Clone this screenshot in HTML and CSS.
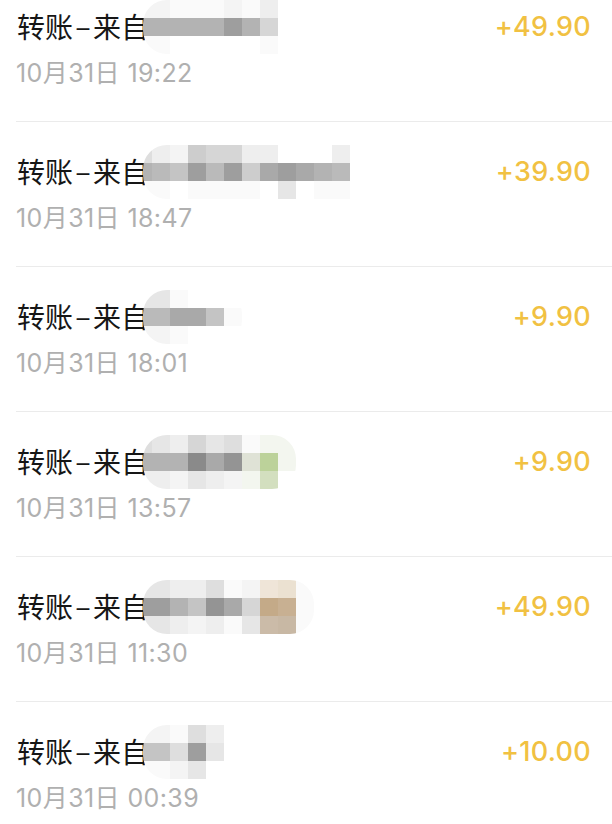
FILE: index.html
```html
<!DOCTYPE html>
<html lang="zh-CN">
<head>
<meta charset="utf-8">
<title>账单</title>
<link rel="stylesheet" href="styles.css">
</head>
<body>
<ul class="list">
  <li class="item item--cut">
    <div class="row">
      <div class="title">转账<span class="dash">-</span>来自<span class="mosaic">
        <i class="s2"></i><i class="s10"></i><i class="s1"></i>
        <i class="s2"></i><i class="s10"></i><i class="s1"></i>
        <i class="s1"></i><i class="s10"></i><i class="s0"></i>
        <i class="s1"></i><i class="s10"></i><i class="s0"></i>
        <i class="s1"></i><i class="s10"></i><i class="s0"></i>
        <i class="s2"></i><i class="s12"></i><i class="s0"></i>
        <i class="s1"></i><i class="s10"></i><i class="s0"></i>
        <i class="s3"></i><i class="s6"></i><i class="s1"></i>
      </span></div>
      <div class="amount">+49.90</div>
    </div>
    <div class="date">10月31日 19:22</div>
  </li>
  <li class="item">
    <div class="row">
      <div class="title">转账<span class="dash">-</span>来自<span class="mosaic">
        <i class="s5"></i><i class="s10"></i><i class="s1"></i>
        <i class="s3"></i><i class="s9"></i><i class="s1"></i>
        <i class="s2"></i><i class="s8"></i><i class="s0"></i>
        <i class="s7"></i><i class="s12"></i><i class="s1"></i>
        <i class="s6"></i><i class="s9"></i><i class="s1"></i>
        <i class="s6"></i><i class="s12"></i><i class="s1"></i>
        <i class="s3"></i><i class="s7"></i><i class="s1"></i>
        <i class="s3"></i><i class="s11"></i><i class="s0"></i>
        <i class="s0"></i><i class="s12"></i><i class="s4"></i>
        <i class="s0"></i><i class="s11"></i><i class="s0"></i>
        <i class="s0"></i><i class="s10"></i><i class="s1"></i>
        <i class="s3"></i><i class="s9"></i><i class="s1"></i>
      </span></div>
      <div class="amount">+39.90</div>
    </div>
    <div class="date">10月31日 18:47</div>
  </li>
  <li class="item">
    <div class="row">
      <div class="title">转账<span class="dash">-</span>来自<span class="mosaic mosaic--round">
        <i class="s4"></i><i class="s9"></i><i class="s2"></i>
        <i class="s4"></i><i class="s9"></i><i class="s2"></i>
        <i class="s1"></i><i class="s11"></i><i class="s1"></i>
        <i class="s0"></i><i class="s11"></i><i class="s0"></i>
        <i class="s0"></i><i class="s8"></i><i class="s0"></i>
        <i class="s0"></i><i class="s1"></i><i class="s0"></i>
      </span></div>
      <div class="amount">+9.90</div>
    </div>
    <div class="date">10月31日 18:01</div>
  </li>
  <li class="item">
    <div class="row">
      <div class="title">转账<span class="dash">-</span>来自<span class="mosaic mosaic--round">
        <i class="s5"></i><i class="s10"></i><i class="s3"></i>
        <i class="s4"></i><i class="s10"></i><i class="s3"></i>
        <i class="s3"></i><i class="s10"></i><i class="s2"></i>
        <i class="s6"></i><i class="s14"></i><i class="s4"></i>
        <i class="s4"></i><i class="s11"></i><i class="s3"></i>
        <i class="s5"></i><i class="s13"></i><i class="s2"></i>
        <i class="s1"></i><i class="g4"></i><i class="g3"></i>
        <i class="g3"></i><i class="g1"></i><i class="g2"></i>
        <i class="g3"></i><i class="g3"></i><i class="s0"></i>
      </span></div>
      <div class="amount">+9.90</div>
    </div>
    <div class="date">10月31日 13:57</div>
  </li>
  <li class="item">
    <div class="row">
      <div class="title">转账<span class="dash">-</span>来自<span class="mosaic mosaic--round">
        <i class="s4"></i><i class="s12"></i><i class="s4"></i>
        <i class="s4"></i><i class="s12"></i><i class="s4"></i>
        <i class="s3"></i><i class="s10"></i><i class="s3"></i>
        <i class="s3"></i><i class="s8"></i><i class="s2"></i>
        <i class="s5"></i><i class="s13"></i><i class="s3"></i>
        <i class="s1"></i><i class="s11"></i><i class="s1"></i>
        <i class="s2"></i><i class="s6"></i><i class="s4"></i>
        <i class="t1"></i><i class="t3"></i><i class="t5"></i>
        <i class="t2"></i><i class="t4"></i><i class="t6"></i>
        <i class="s1"></i><i class="s1"></i><i class="s1"></i>
      </span></div>
      <div class="amount">+49.90</div>
    </div>
    <div class="date">10月31日 11:30</div>
  </li>
  <li class="item">
    <div class="row">
      <div class="title">转账<span class="dash">-</span>来自<span class="mosaic">
        <i class="s2"></i><i class="s8"></i><i class="s1"></i>
        <i class="s2"></i><i class="s8"></i><i class="s1"></i>
        <i class="s1"></i><i class="s5"></i><i class="s2"></i>
        <i class="s5"></i><i class="s12"></i><i class="s4"></i>
        <i class="s3"></i><i class="s4"></i><i class="s0"></i>
      </span></div>
      <div class="amount">+10.00</div>
    </div>
    <div class="date">10月31日 00:39</div>
  </li>
</ul>
</body>
</html>
```

FILE: styles.css
```css
html, body {
  margin: 0;
  padding: 0;
  background: #ffffff;
}

body {
  font-family: Inter, "Noto Sans CJK SC", sans-serif;
  overflow: hidden;
}

.list {
  list-style: none;
  margin: 0;
  padding: 0;
}

.item {
  margin-left: 16px;
  padding: 35px 21px 35px 0;
  border-bottom: 1px solid #ebebeb;
}

.item--cut {
  padding-top: 12px;
}

.row {
  display: flex;
  align-items: center;
  justify-content: space-between;
  height: 30px;
}

.title {
  position: relative;
  padding-left: 1px;
  font-size: 28px;
  line-height: 30px;
  color: #161616;
  font-family: "Noto Sans CJK SC", sans-serif;
  font-weight: 400;
}

.dash {
  display: inline-block;
  width: 20px;
  text-align: center;
  font-family: Inter, sans-serif;
  font-weight: 300;
  transform: scaleX(1.5);
}

.amount {
  font-size: 27px;
  line-height: 30px;
  color: #f1c142;
  font-weight: 500;
  letter-spacing: 0.3px;
}

.date {
  margin-top: 18px;
  font-size: 25px;
  line-height: 26px;
  color: #b0b0b0;
  font-weight: 400;
  letter-spacing: 0.4px;
}

/* pixelated name that sits over the end of the title */
.mosaic {
  position: absolute;
  left: calc(100% - 6px);
  top: 50%;
  transform: translateY(-50%);
  display: grid;
  grid-template-rows: repeat(3, 18px);
  grid-template-columns: 9px;
  grid-auto-columns: 18px;
  grid-auto-flow: column;
  overflow: hidden;
  border-radius: 24px 0 0 24px;
}

.mosaic--round {
  border-radius: 24px;
}

.mosaic i {
  display: block;
}

.s0 { background: #ffffff; }
.s1 { background: #fafafa; }
.s2 { background: #f4f4f4; }
.s3 { background: #eeeeee; }
.s4 { background: #e6e6e6; }
.s5 { background: #dedede; }
.s6 { background: #d6d6d6; }
.s7 { background: #cdcdcd; }
.s8 { background: #c4c4c4; }
.s9 { background: #bababa; }
.s10 { background: #b3b3b3; }
.s11 { background: #a9a9a9; }
.s12 { background: #9e9e9e; }
.s13 { background: #949494; }
.s14 { background: #8a8a8a; }

.g1 { background: #bcd29a; }
.g2 { background: #d3dfbf; }
.g3 { background: #f3f6ef; }
.g4 { background: #dfe2d6; }

.t1 { background: #efe5d8; }
.t2 { background: #ebe1d1; }
.t3 { background: #c4aa88; }
.t4 { background: #c8b092; }
.t5 { background: #cbbba8; }
.t6 { background: #c8b8a4; }
```
